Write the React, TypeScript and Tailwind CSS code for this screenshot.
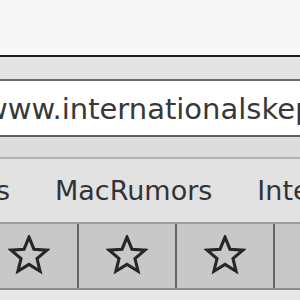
const StarIcon = () => (
  <svg width="42" height="42" viewBox="0 0 40 40" fill="none">
    <polygon
      points="20,2 24.7,13.5 37.1,14.4 27.6,22.5 30.6,34.6 20,28 9.4,34.6 12.4,22.5 2.9,14.4 15.3,13.5"
      stroke="#262626"
      strokeWidth="2.9"
      strokeLinejoin="miter"
    />
  </svg>
);

export default function App() {
  return (
    <div className="w-[300px] h-[300px] overflow-hidden flex flex-col bg-[#e8e8e8] font-['DejaVu_Sans',sans-serif]">
      {/* Title area */}
      <div className="h-[57px] shrink-0 bg-[#f7f7f7] border-b-2 border-[#1c1c1c]" />

      {/* Toolbar strip */}
      <div className="h-[24px] shrink-0 bg-[#e3e3e3] border-b-2 border-[#6b6b6b]" />

      {/* Address field */}
      <div className="h-[56px] shrink-0 bg-white border-b-2 border-[#5e5e5e] flex items-center overflow-hidden">
        <span className="ml-[-16px] whitespace-nowrap text-[29px] leading-none text-[#383838] pt-[2px]">
          www.internationalskeptics.com
        </span>
      </div>

      {/* Gap strip */}
      <div className="h-[22px] shrink-0 bg-[#dcdcdc] border-b-2 border-[#b3b3b3]" />

      {/* Bookmarks bar */}
      <div className="h-[65px] shrink-0 bg-[#e2e2e2] border-b-2 border-[#9c9c9c] flex items-center gap-[45px] overflow-hidden whitespace-nowrap text-[27px] leading-none text-[#333333]">
        <div className="w-[10px] shrink-0 flex justify-end overflow-hidden">
          <span>News</span>
        </div>
        <span>MacRumors</span>
        <span>International Skeptics</span>
      </div>

      {/* Favourites strip */}
      <div className="h-[66px] shrink-0 bg-[#c8c8c8] border-b-2 border-[#8c8c8c] flex overflow-hidden">
        <div className="ml-[-19px] flex">
          {[0, 1, 2, 3].map((i) => (
            <div
              key={i}
              className="w-[98px] shrink-0 border-r-2 border-[#666666] flex items-center justify-center"
            >
              <StarIcon />
            </div>
          ))}
        </div>
      </div>
    </div>
  );
}
